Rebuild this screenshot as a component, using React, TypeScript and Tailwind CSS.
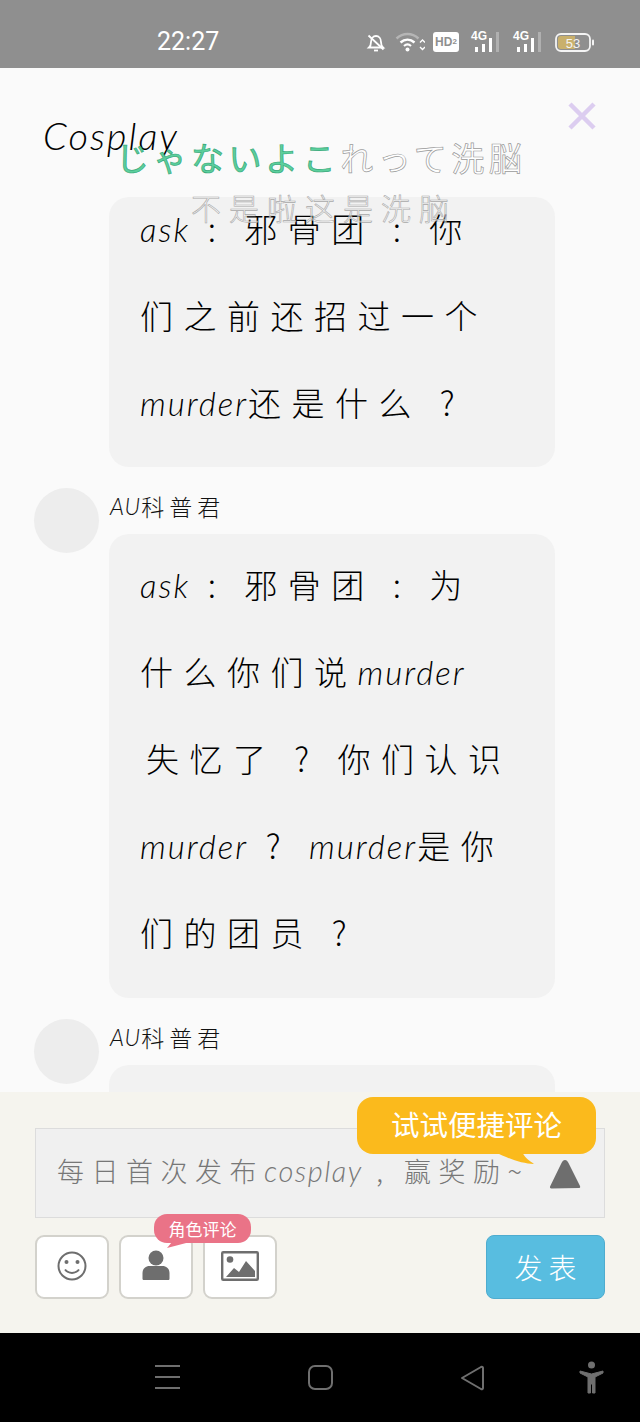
import React from "react";

const cjk = "font-['Noto_Sans_CJK_SC','Noto_Sans',sans-serif]";

function L({ children }: { children: React.ReactNode }) {
  return <span className="italic font-['Lato','Noto_Sans',sans-serif] text-[33px] font-light tracking-[2px] text-black">{children}</span>;
}

function Line({ children }: { children: React.ReactNode }) {
  return <div className="h-[87px] whitespace-nowrap leading-[87px] tracking-[10.500px]">{children}</div>;
}

function Bubble({ children, className = "" }: { children: React.ReactNode; className?: string }) {
  return (
    <div className={`ml-[109px] w-[446px] shrink-0 overflow-hidden rounded-[20px] bg-[#f2f2f2] pl-[31px] text-[33px] font-light text-[#000] ${className}`}>
      {children}
    </div>
  );
}

function Name() {
  return (
    <div className="flex h-[46px] items-center pb-[10px] pl-[110px] text-[23px] font-light leading-none text-[#111]">
      <span className="italic font-['Lato',sans-serif] tracking-[1px]">AU</span>
      <span className="tracking-[5px]">科普君</span>
    </div>
  );
}

function Message({ children, clip }: { children?: React.ReactNode; clip?: boolean }) {
  return (
    <div className="relative shrink-0">
      <div className="absolute left-[34px] top-0 h-[65px] w-[65px] rounded-full bg-[#ededed]" />
      <Name />
      <Bubble className={clip ? "h-[80px]" : "pb-[22px]"}>{children}</Bubble>
    </div>
  );
}

function StatusIcons() {
  return (
    <div className="flex items-center pt-[16px]">
      <svg width="20" height="22" viewBox="0 0 20 22" fill="none" stroke="#fff" strokeWidth="1.8" className="ml-[366px]">
        <path d="M3 16.5c1.6-1.4 2-2.6 2-5.5 0-3.4 2-6 5-6s5 2.6 5 6c0 2.900.4 4.100 2 5.500z" />
        <path d="M8 19.500h4" />
        <path d="M2.500 4.500l15 14" />
      </svg>
      <svg width="30" height="24" viewBox="0 0 30 24" fill="none" className="ml-[9px]">
        <path d="M1.500 8.500C8 2.500 17 2.500 23.500 8.500" stroke="#b5b5b5" strokeWidth="2.400" />
        <path d="M5.500 12.500c4.200-3.800 9.800-3.800 14 0" stroke="#fff" strokeWidth="2.400" />
        <path d="M9 16c2.300-2 4.700-2 7 0" stroke="#fff" strokeWidth="2.200" />
        <circle cx="12.500" cy="19.500" r="2" fill="#fff" />
        <path d="M25 12.500l2.500-2.500 2.500 2.500M25 17l2.500 2.500L30 17" stroke="#fff" strokeWidth="1.400" />
      </svg>
      <div className="ml-[8px] flex h-[20px] w-[26px] items-center justify-center rounded-[3px] bg-white font-['Liberation_Sans',sans-serif] text-[12px] font-bold leading-none text-[#8f8f8f]">
        HD<span className="text-[8px]">2</span>
      </div>
      <Signal className="ml-[12px]" />
      <Signal className="ml-[13px]" />
      <svg width="40" height="22" viewBox="0 0 40 22" className="ml-[13px]">
        <rect x="1" y="3" width="34" height="17" rx="5" fill="none" stroke="#f4f4f4" strokeWidth="1.800" />
        <path d="M3 8a3 3 0 0 1 3-3h14v13H6a3 3 0 0 1-3-3z" fill="#c9b06c" />
        <rect x="37" y="8.500" width="2" height="6" rx="1" fill="#f4f4f4" />
        <text x="18" y="16.500" textAnchor="middle" fontSize="13" fill="#f4f4f4" fontFamily="Liberation Sans, sans-serif">53</text>
      </svg>
    </div>
  );
}

function Signal({ className = "" }: { className?: string }) {
  return (
    <div className={`relative h-[24px] w-[29px] ${className}`}>
      <span className="absolute left-0 top-0 font-['Liberation_Sans',sans-serif] text-[12px] font-bold leading-[13px] text-white">4G</span>
      <span className="absolute bottom-[2px] left-[4px] h-[5px] w-[3px] bg-white" />
      <span className="absolute bottom-[2px] left-[11px] h-[8px] w-[3px] bg-white" />
      <span className="absolute bottom-[2px] left-[18px] h-[14px] w-[3px] bg-white" />
      <span className="absolute bottom-[2px] left-[25px] h-[20px] w-[3px] bg-[#b0b0b0]" />
    </div>
  );
}

function ToolButton({ children }: { children: React.ReactNode }) {
  return (
    <div className="flex h-[64px] w-[74px] items-center justify-center rounded-[9px] border-2 border-[#d3d2cc] bg-white pb-[2px]">
      {children}
    </div>
  );
}

export default function App() {
  return (
    <div className={`relative flex h-[1422px] w-[640px] flex-col overflow-hidden bg-black ${cjk}`}>
      <div className="flex h-[68px] shrink-0 items-center bg-[#8f8f8f] text-white">
        <div className="absolute left-[157px] top-[27px] font-['Roboto',sans-serif] text-[25px] leading-[30px]">22:27</div>
        <StatusIcons />
      </div>

      <div className="relative flex h-[1024px] shrink-0 flex-col overflow-hidden bg-[#fafafa]">
        <div className="h-[129px] shrink-0" />
        <Bubble className="h-[270px]">
          <div className="-mt-[12px]">
            <Line><L>ask</L> : 邪骨团 : 你</Line>
            <Line>们之前还招过一个</Line>
            <Line><L>murder</L>还是什么 ?</Line>
          </div>
        </Bubble>
        <div className="mt-[21px] shrink-0">
          <Message>
            <div className="pt-[7px]">
              <Line><L>ask</L> : 邪骨团 : 为</Line>
              <Line>什么你们说<L>murder</L></Line>
              <Line><span className="pl-[6px]">失忆了 ? 你们认识</span></Line>
              <Line><L>murder</L> ? <L>murder</L>是你</Line>
              <Line>们的团员 ?</Line>
            </div>
          </Message>
        </div>
        <div className="mt-[21px] shrink-0">
          <Message clip />
        </div>

        <div className="absolute left-[43px] top-[45px] font-['Lato',sans-serif] text-[38px] font-light italic leading-[44px] tracking-[2px] text-black">
          Cosplay
        </div>
        <svg width="30" height="30" viewBox="0 0 30 30" className="absolute left-[567px] top-[33px]">
          <path d="M3 3l24 24M27 3L3 27" stroke="#dccdf0" strokeWidth="4.500" />
        </svg>
        <div className="absolute left-[116px] top-[64px] whitespace-nowrap text-[33px] font-normal leading-[50px] tracking-[4.500px]">
          <span className="text-[#5ccf9d] [-webkit-text-stroke:0.700px_#35a878]">じゃないよこ</span>
          <span className="text-white [-webkit-text-stroke:0.700px_#9a9a9a]">れって洗脳</span>
        </div>
        <div className="absolute left-[191px] top-[119px] whitespace-nowrap text-[30px] font-light leading-[40px] tracking-[8px] text-white/50 [-webkit-text-stroke:0.600px_#a8a8a8]">
          不是啦这是洗脑
        </div>
      </div>

      <div className="relative h-[241px] shrink-0 bg-[#f5f4ee] px-[35px] pt-[36px]">
        <div className="flex h-[90px] w-[570px] items-center justify-between border-[1.500px] border-[#dcdcdc] bg-[#f0f0f0] pl-[21px] pr-[23px]">
          <div className="-mt-[4px] whitespace-nowrap text-[27px] font-light tracking-[7.500px] text-[#777]">
            每日首次发布<span className="italic font-['Lato',sans-serif] text-[29px] font-light tracking-[1.500px]">cosplay</span> , 赢奖励<span className="tracking-normal">~</span>
          </div>
          <svg width="32" height="30" viewBox="0 0 32 30" className="mt-[2px] shrink-0">
            <path d="M16 1c1.500 0 2.500 1 3.500 3L31 27c.500 1.500 0 2-1.500 2l-27 .5c-1.500 0-2-1-1.200-2.500L12.500 4c1-2 2-3 3.500-3z" fill="#6e6e6e" />
          </svg>
        </div>

        <div className="mt-[17px] flex items-center gap-[10px]">
          <ToolButton>
            <svg width="32" height="32" viewBox="0 0 32 32" fill="none" stroke="#6e6e6e" strokeWidth="2">
              <circle cx="16" cy="16" r="13.500" />
              <circle cx="10.500" cy="12" r="2" fill="#6e6e6e" stroke="none" />
              <circle cx="21.500" cy="12" r="2" fill="#6e6e6e" stroke="none" />
              <path d="M9 19.500c3.500 4.500 10.500 4.500 14 0" />
            </svg>
          </ToolButton>
          <ToolButton>
            <svg width="28" height="32" viewBox="0 0 28 32" fill="#6e6e6e">
              <circle cx="14" cy="8" r="7.500" />
              <path d="M2 30c-1 0-1.500-.5-1.500-1.500V23c0-4 3-7 7-7h13c4 0 7 3 7 7v5.500c0 1-.5 1.500-1.500 1.500z" />
            </svg>
          </ToolButton>
          <ToolButton>
            <svg width="38" height="30" viewBox="0 0 38 30">
              <rect x="1.200" y="1.200" width="35.600" height="27.600" rx="1" fill="none" stroke="#6e6e6e" strokeWidth="2.400" />
              <circle cx="9" cy="8.500" r="3.300" fill="#6e6e6e" />
              <path d="M5 26l8-9 5 4 7-11 9 10v6z" fill="#6e6e6e" />
            </svg>
          </ToolButton>
          <div className="ml-auto flex h-[64px] w-[119px] items-center justify-center rounded-[8px] border border-[#4eaccf] bg-[#58bde0] text-[28px] font-light tracking-[6px] text-white">
            <span className="pl-[6px]">发表</span>
          </div>
        </div>

        <div className="absolute left-[154px] top-[122px] flex h-[29px] w-[97px] items-center justify-center rounded-[13px] bg-[#ea7387] text-[17px] leading-none text-white">
          角色评论
          <svg width="26" height="8" viewBox="0 0 26 8" className="absolute left-[11px] top-[28px]">
            <path d="M7 0L2 6 25 0z" fill="#ea7387" />
          </svg>
        </div>
        <div className="absolute left-[357px] top-[5px] flex h-[57px] w-[239px] items-center justify-center rounded-[16px] bg-[#fbba1c] pb-[2px] text-[28.500px] leading-none text-white">
          试试便捷评论
          <svg width="42" height="14" viewBox="0 0 42 14" className="absolute left-[138px] top-[55px]">
            <path d="M0 0h27c3 6 8 9 12 12-12 0-27-6-39-12z" fill="#fbba1c" />
          </svg>
        </div>
      </div>

      <div className="relative flex-1 bg-black">
        <svg width="500" height="50" viewBox="0 0 500 50" fill="none" className="absolute left-[130px] top-[26px]" stroke="#6f6f6f" strokeWidth="2">
          <path d="M25 7h25M25 18h25M25 29h25" />
          <rect x="179" y="7" width="23" height="23" rx="6" />
          <path d="M332 19l19-11c1-.500 2 0 2 1v20c0 1-1 1.500-2 1z" strokeLinejoin="round" />
          <circle cx="461.500" cy="6" r="3.500" fill="#6f6f6f" stroke="none" />
          <path d="M450 12l11.500 3 11.500-3v2l-8 4v16h-2.500v-9h-2v9H458V18l-8-4z" fill="#6f6f6f" stroke="#6f6f6f" strokeWidth="1" />
        </svg>
      </div>
    </div>
  );
}
